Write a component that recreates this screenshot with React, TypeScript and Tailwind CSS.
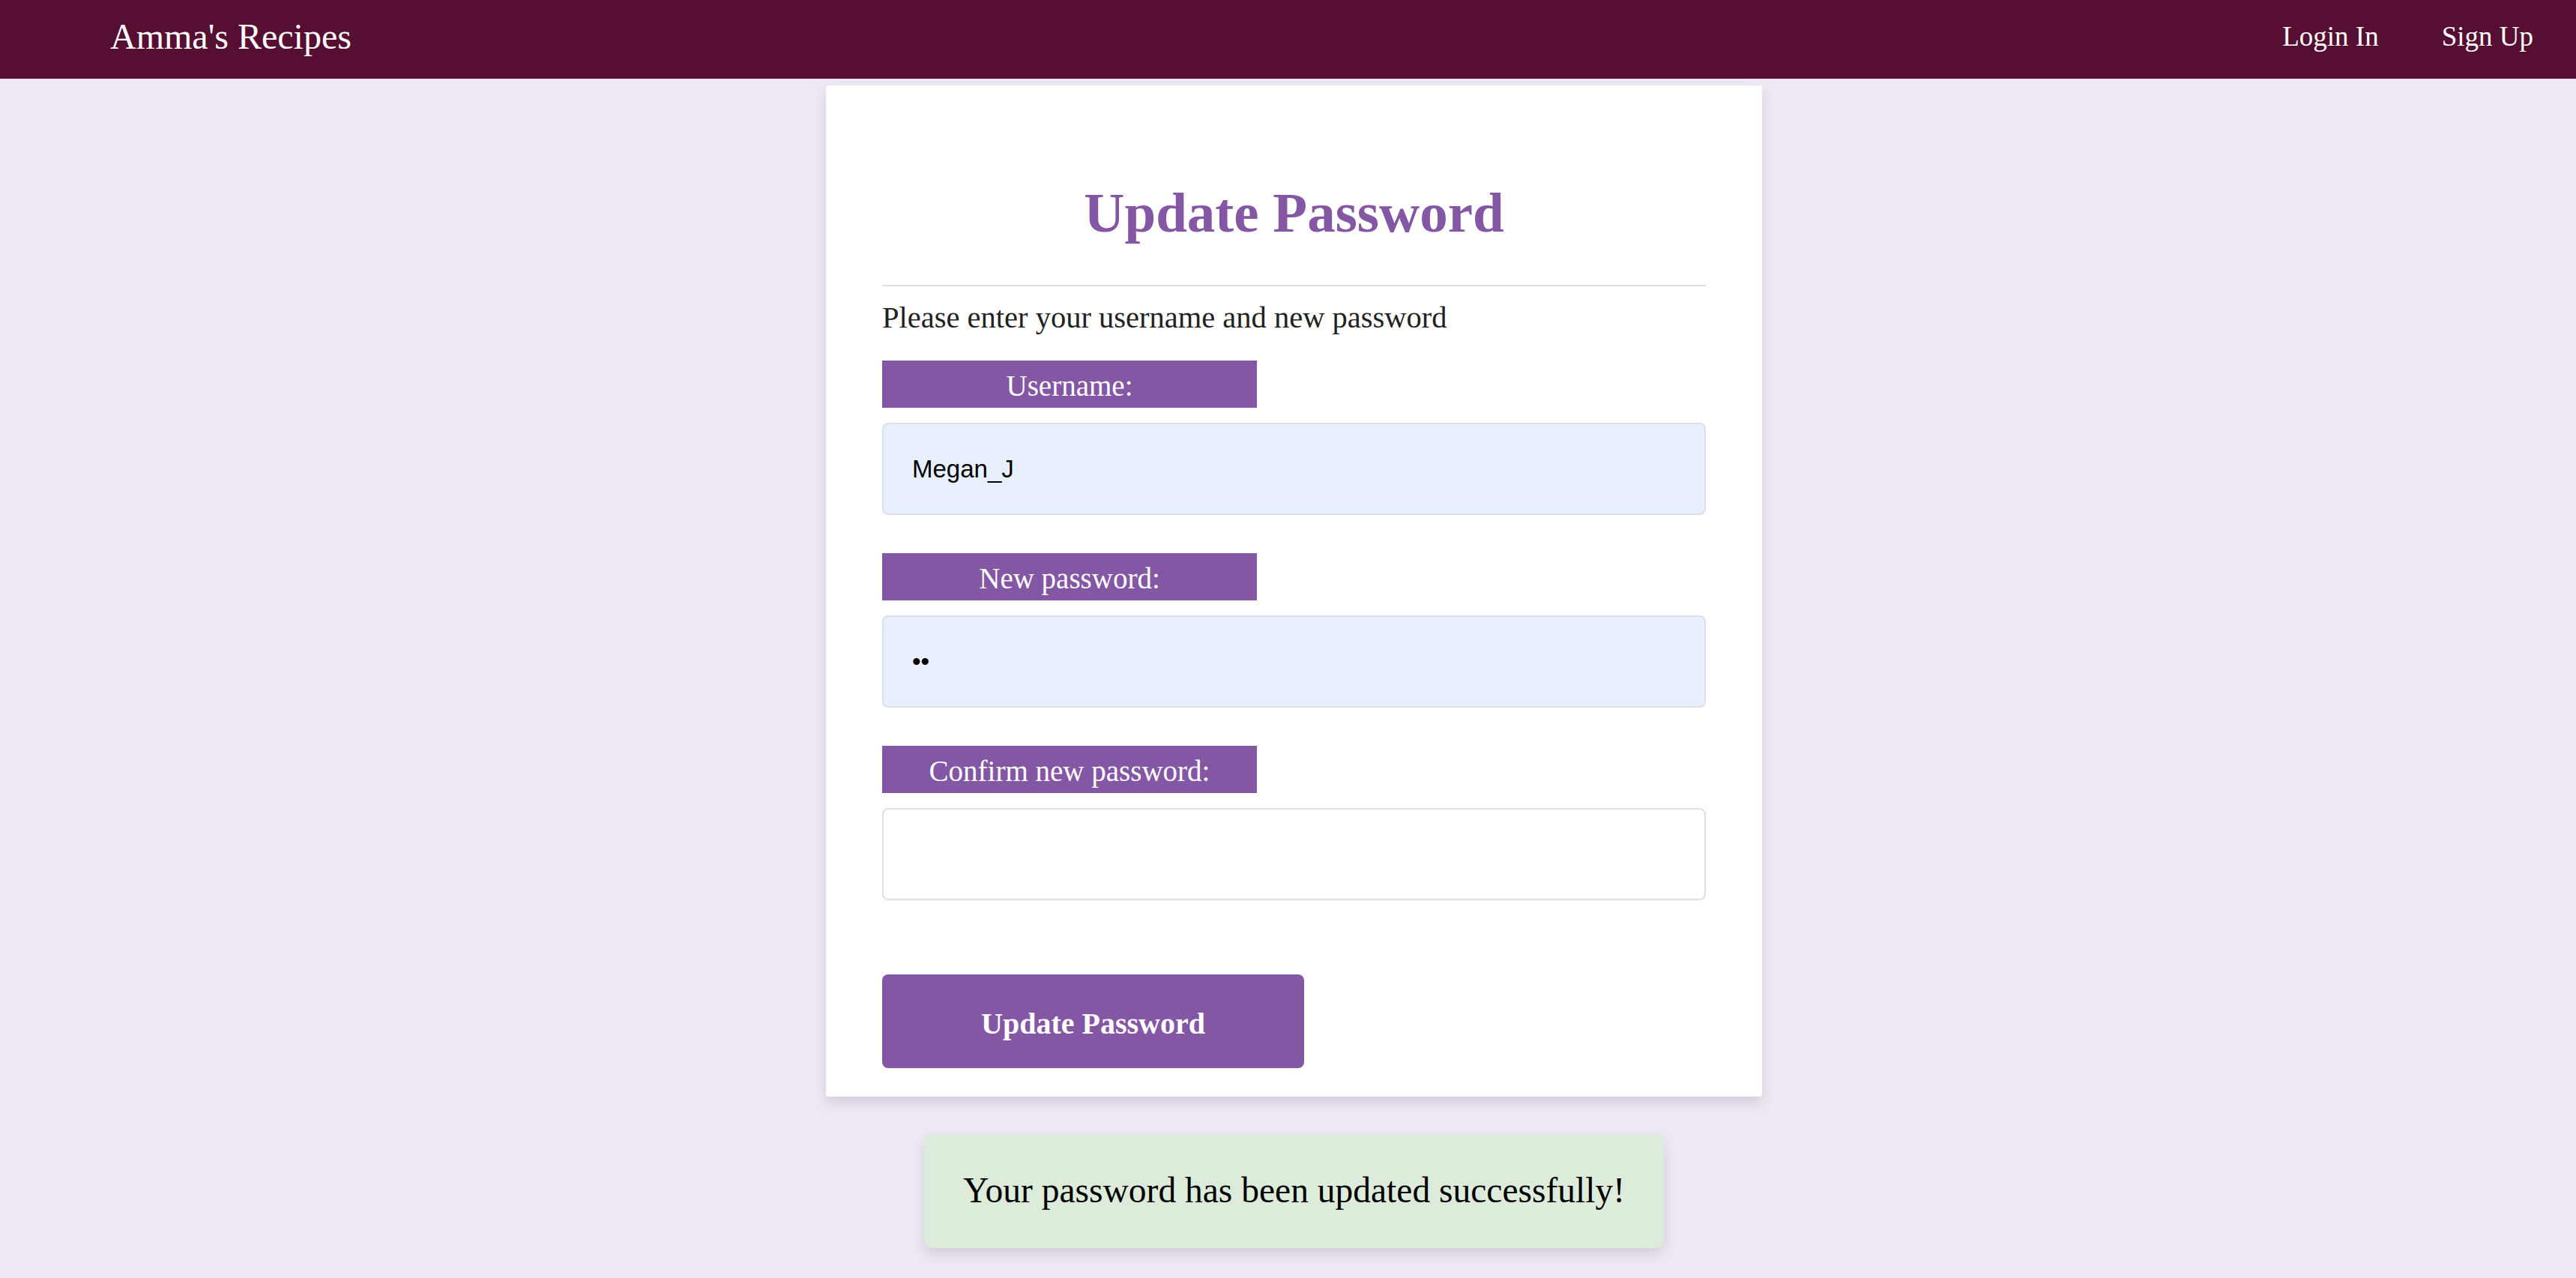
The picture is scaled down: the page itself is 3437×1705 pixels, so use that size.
import { useState } from 'react';

const serif = { fontFamily: '"Liberation Serif", "Times New Roman", serif' };

function Field({ label, value, type = 'text', filled }: { label: string; value: string; type?: string; filled?: boolean }) {
  return (
    <div className="flex flex-col">
      <label className="flex h-[63px] w-[500px] items-center justify-center bg-[#8457a5] pt-[5px] text-[39px] text-white">
        {label}
      </label>
      <input
        type={type}
        value={value}
        readOnly
        className={`mt-[20px] h-[123px] w-full rounded-lg border-2 border-[#dfe0e5] pl-[38px] text-[33px] text-black outline-none ${
          filled ? 'bg-[#e8f0fe]' : 'bg-white'
        }`}
        style={{ fontFamily: '"Liberation Sans", Arial, sans-serif' }}
      />
    </div>
  );
}

export default function App() {
  const [done] = useState(true);

  return (
    <div className="min-h-screen bg-[#efe9f5]" style={serif}>
      {/* Navbar */}
      <nav className="flex h-[105px] items-center justify-between bg-[#560e33] pb-[8px] pl-[147px] pr-[57px] text-white">
        <span className="text-[48px]">Amma's Recipes</span>
        <div className="flex items-center gap-[84px] text-[37px]">
          <a href="#">Login In</a>
          <a href="#">Sign Up</a>
        </div>
      </nav>

      <main className="flex flex-col items-center pl-[16px] pt-[9px] pb-10">
        {/* Card */}
        <div className="w-[1249px] rounded-[3px] bg-white px-[75px] pb-[38px] pt-[132px] shadow-[0_8px_18px_rgba(70,50,90,0.16)]">
          <h1 className="text-center text-[75px] font-bold leading-[75px] text-[#8457a5]">Update Password</h1>
          <div className="mt-[59px] h-[2px] bg-[#e0dee4]" />
          <p className="mt-[21px] text-[40.5px] leading-[41px] text-[#222]">
            Please enter your username and new password
          </p>

          <form className="mt-[37px] flex flex-col gap-[51px]" onSubmit={(e) => e.preventDefault()}>
            <Field label="Username:" value="Megan_J" filled />
            <Field label="New password:" value="12" type="password" filled />
            <Field label="Confirm new password:" value="" type="password" />
          </form>

          <button className="mt-[99px] flex h-[125px] w-[563px] items-center justify-center rounded-lg bg-[#8457a5] pt-[6px] text-[40px] font-bold text-white">
            Update Password
          </button>
        </div>

        {/* Success message */}
        {done && (
          <div className="mt-[50px] flex h-[152px] w-[987px] items-center justify-center rounded-[10px] bg-[#dcebda] text-[47.5px] text-black shadow-[0_8px_18px_rgba(70,50,90,0.16)]">
            Your password has been updated successfully!
          </div>
        )}
      </main>
    </div>
  );
}
